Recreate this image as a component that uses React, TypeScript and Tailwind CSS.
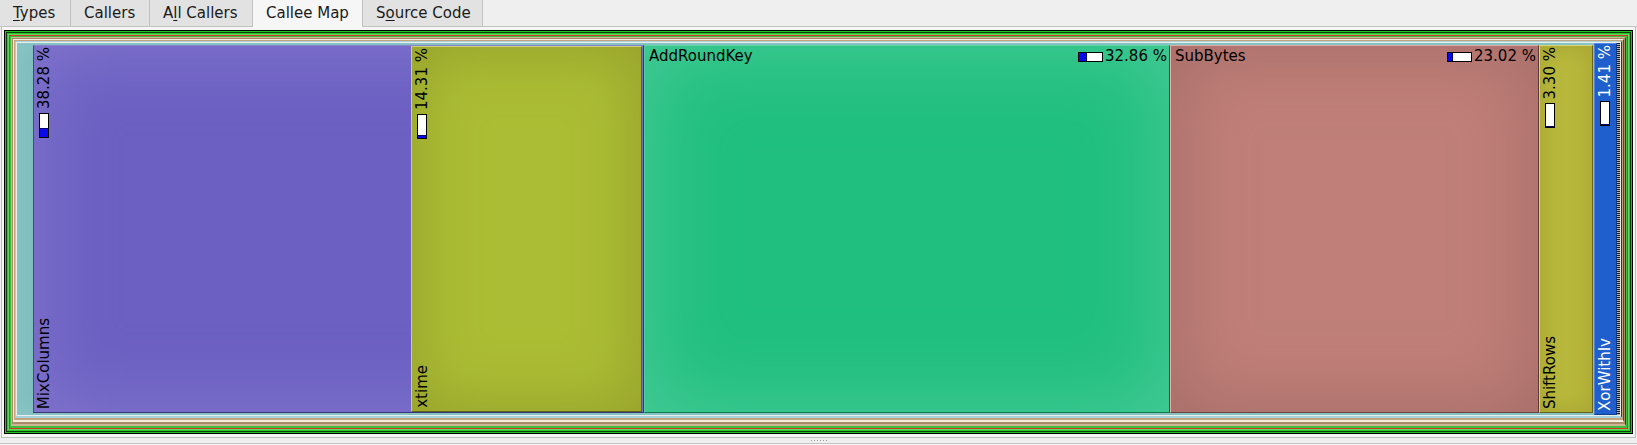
import React from "react";

function HBar({ pct }: { pct: number }) {
  return (
    <div className="w-[25px] h-[10px] border border-black bg-white flex">
      <div
        className="h-full bg-[#0a0ae8] border-r border-[#00006a]"
        style={{ width: `${Math.max(1, Math.round((23 * pct) / 100))}px` }}
      />
    </div>
  );
}

function VBar({ pct }: { pct: number }) {
  return (
    <div className="w-[10px] h-[25px] border border-black bg-white flex flex-col justify-end">
      <div
        className="w-full bg-[#0a0ae8] border-t border-[#00006a]"
        style={{ height: `${Math.max(1, Math.round((23 * pct) / 100))}px` }}
      />
    </div>
  );
}

function VLabels({ name, pct, light }: { name: string; pct: number; light?: boolean }) {
  return (
    <div className={light ? "flex flex-col justify-between h-full pl-[2px] pt-[1px] pb-[3px] text-white" : "flex flex-col justify-between h-full pl-[2px] pt-[1px] pb-[3px] text-black"}>
      <div className="flex flex-col items-start">
        <span className="[writing-mode:vertical-rl] rotate-180 leading-[16px] whitespace-nowrap">
          {pct.toFixed(2)} %
        </span>
        <div className="ml-[3px] mt-[4px]">
          <VBar pct={pct} />
        </div>
      </div>
      <span className="[writing-mode:vertical-rl] rotate-180 leading-[16px] whitespace-nowrap">{name}</span>
    </div>
  );
}

function HLabels({ name, pct }: { name: string; pct: number }) {
  return (
    <div className="flex justify-between items-start pl-[4px] pr-[2px] pt-[2px] leading-[17px]">
      <span className="whitespace-nowrap">{name}</span>
      <div className="flex items-center gap-[2px]">
        <HBar pct={pct} />
        <span className="whitespace-nowrap">{pct.toFixed(2)} %</span>
      </div>
    </div>
  );
}

const stripes = [
  "border border-black",
  "border border-[#1ec41e]",
  "border border-[#0f3d0f]",
  "border border-[#23cc23]",
  "border border-[#62d462]",
  "border border-[#d23b22]",
  "border-t border-x border-b-2 border-[#3cbd3c]",
  "border-t border-x border-b-2 border-[#cdb595] border-r-[#3a3a3a]",
  "border-t border-x border-b-2 border-[#a98b67]",
  "border-t border-x border-b-2 border-[#f3ece1] border-r-[#4a4a4a]",
  "border-t border-x border-b-2 border-[#c5a37b]",
  "border-t border-x border-b-2 border-[#a9d1dc] border-r-[#333333]",
  "border border-[#e7efef]",
];

function Stripes({ children }: { children: React.ReactNode }) {
  let node: React.ReactNode = children;
  for (let i = stripes.length - 1; i >= 0; i--) {
    node = <div className={"flex flex-1 min-w-0 min-h-0 " + stripes[i]}>{node}</div>;
  }
  return <>{node}</>;
}

function Treemap() {
  return (
    <div className="w-[1629px] h-[404px] flex">
      <Stripes>
        <div className="flex flex-1 min-w-0">
          {/* teal parent */}
          <div className="w-[1577px] flex pl-[16px] pt-[2px] pb-[2px] pr-[1px] bg-[#7fbdbd] shadow-[inset_0_0_20px_2px_#8cc6c6]">
            {/* MixColumns */}
            <div className="w-[611px] flex border border-t-[#8a7fd2] border-l-[#4b4296] border-b-[#3c3478] border-r-[#3a3270] bg-[#6c60c2] shadow-[inset_0_0_70px_6px_#8276cd]">
              <div className="w-[377px]">
                <VLabels name="MixColumns" pct={38.28} />
              </div>
              {/* xtime */}
              <div className="w-[231px] border border-t-[#c8d27a] border-l-[#c8d27a] border-b-[#5e6418] border-r-[#5e6418] bg-[#abbd34] shadow-[inset_0_0_60px_6px_#97a22c]">
                <VLabels name="xtime" pct={14.31} />
              </div>
              <div className="w-[1px]" />
            </div>
            {/* AddRoundKey */}
            <div className="w-[526px] border border-t-[#5ad6a2] border-l-[#4fcf9a] border-b-[#137a50] border-r-[#0f6a44] bg-[#20bf7f] shadow-[inset_0_0_80px_8px_#45ca95]">
              <HLabels name="AddRoundKey" pct={32.86} />
            </div>
            {/* SubBytes */}
            <div className="w-[369px] border border-t-[#e0aaa4] border-l-[#e6b2ac] border-b-[#6e4440] border-r-[#5e3834] bg-[#c07f79] shadow-[inset_0_0_70px_8px_#a76e69]">
              <HLabels name="SubBytes" pct={23.02} />
            </div>
            {/* ShiftRows */}
            <div className="w-[54px] border border-t-[#d6d67a] border-l-[#d6d67a] border-b-[#66641c] border-r-[#66641c] bg-[#b8b93c] shadow-[inset_0_0_20px_4px_#a9a634]">
              <VLabels name="ShiftRows" pct={3.3} />
            </div>
          </div>
          {/* XorWithIv */}
          <div className="w-[23px] border border-t-[#5a8ae0] border-l-[#4f82dc] border-b-[#123f8e] border-r-[#0f3a86] bg-[#1f5fcd]">
            <VLabels name="XorWithIv" pct={1.41} light />
          </div>
          <div className="w-[3px] bg-[repeating-linear-gradient(180deg,#1a1a1a_0px,#1a1a1a_1px,#c9ad84_1px,#c9ad84_2px)]" />
        </div>
      </Stripes>
    </div>
  );
}

function Tab({ children, w, active }: { children: React.ReactNode; w: string; active?: boolean }) {
  return (
    <div
      className={
        active
          ? "h-full flex items-center pl-[13px] border-r border-[#c2c2c2] bg-[#f6f6f6] text-[#1a1a1a] " + w
          : "h-full flex items-center pl-[13px] border-r border-b border-[#c2c2c2] bg-[#e2e2e2] text-[#1a1a1a] " + w
      }
    >
      {children}
    </div>
  );
}

export default function App() {
  return (
    <div className="w-[1637px] h-[445px] bg-[#efefef] flex flex-col overflow-hidden font-['DejaVu_Sans',sans-serif] text-[15px] text-black">
      <div className="flex h-[27px] shrink-0">
        <Tab w="w-[71px]">
          <span>
            <span className="underline underline-offset-2">T</span>ypes
          </span>
        </Tab>
        <Tab w="w-[79px]">Callers</Tab>
        <Tab w="w-[103px]">
          <span>
            A<span className="underline underline-offset-2">l</span>l Callers
          </span>
        </Tab>
        <Tab w="w-[110px]" active>
          Callee Map
        </Tab>
        <Tab w="w-[120px]">
          <span>
            S<span className="underline underline-offset-2">o</span>urce Code
          </span>
        </Tab>
        <div className="flex-1 border-b border-[#c2c2c2]" />
      </div>
      <div className="mx-[1px] h-[411px] shrink-0 border-x border-b border-[#bdbdbd] bg-[#f6f6f6] pl-[2px] pt-[3px]">
        <Treemap />
      </div>
      <div className="h-[5px] shrink-0 flex items-center justify-center gap-[2px]">
        <div className="w-[1px] h-[1px] bg-[#9a9a9a]" />
        <div className="w-[1px] h-[1px] bg-[#9a9a9a]" />
        <div className="w-[1px] h-[1px] bg-[#9a9a9a]" />
        <div className="w-[1px] h-[1px] bg-[#9a9a9a]" />
        <div className="w-[1px] h-[1px] bg-[#9a9a9a]" />
        <div className="w-[1px] h-[1px] bg-[#9a9a9a]" />
      </div>
      <div className="flex-1 border-t border-[#c4c4c4] bg-[#f8f8f8]" />
    </div>
  );
}
